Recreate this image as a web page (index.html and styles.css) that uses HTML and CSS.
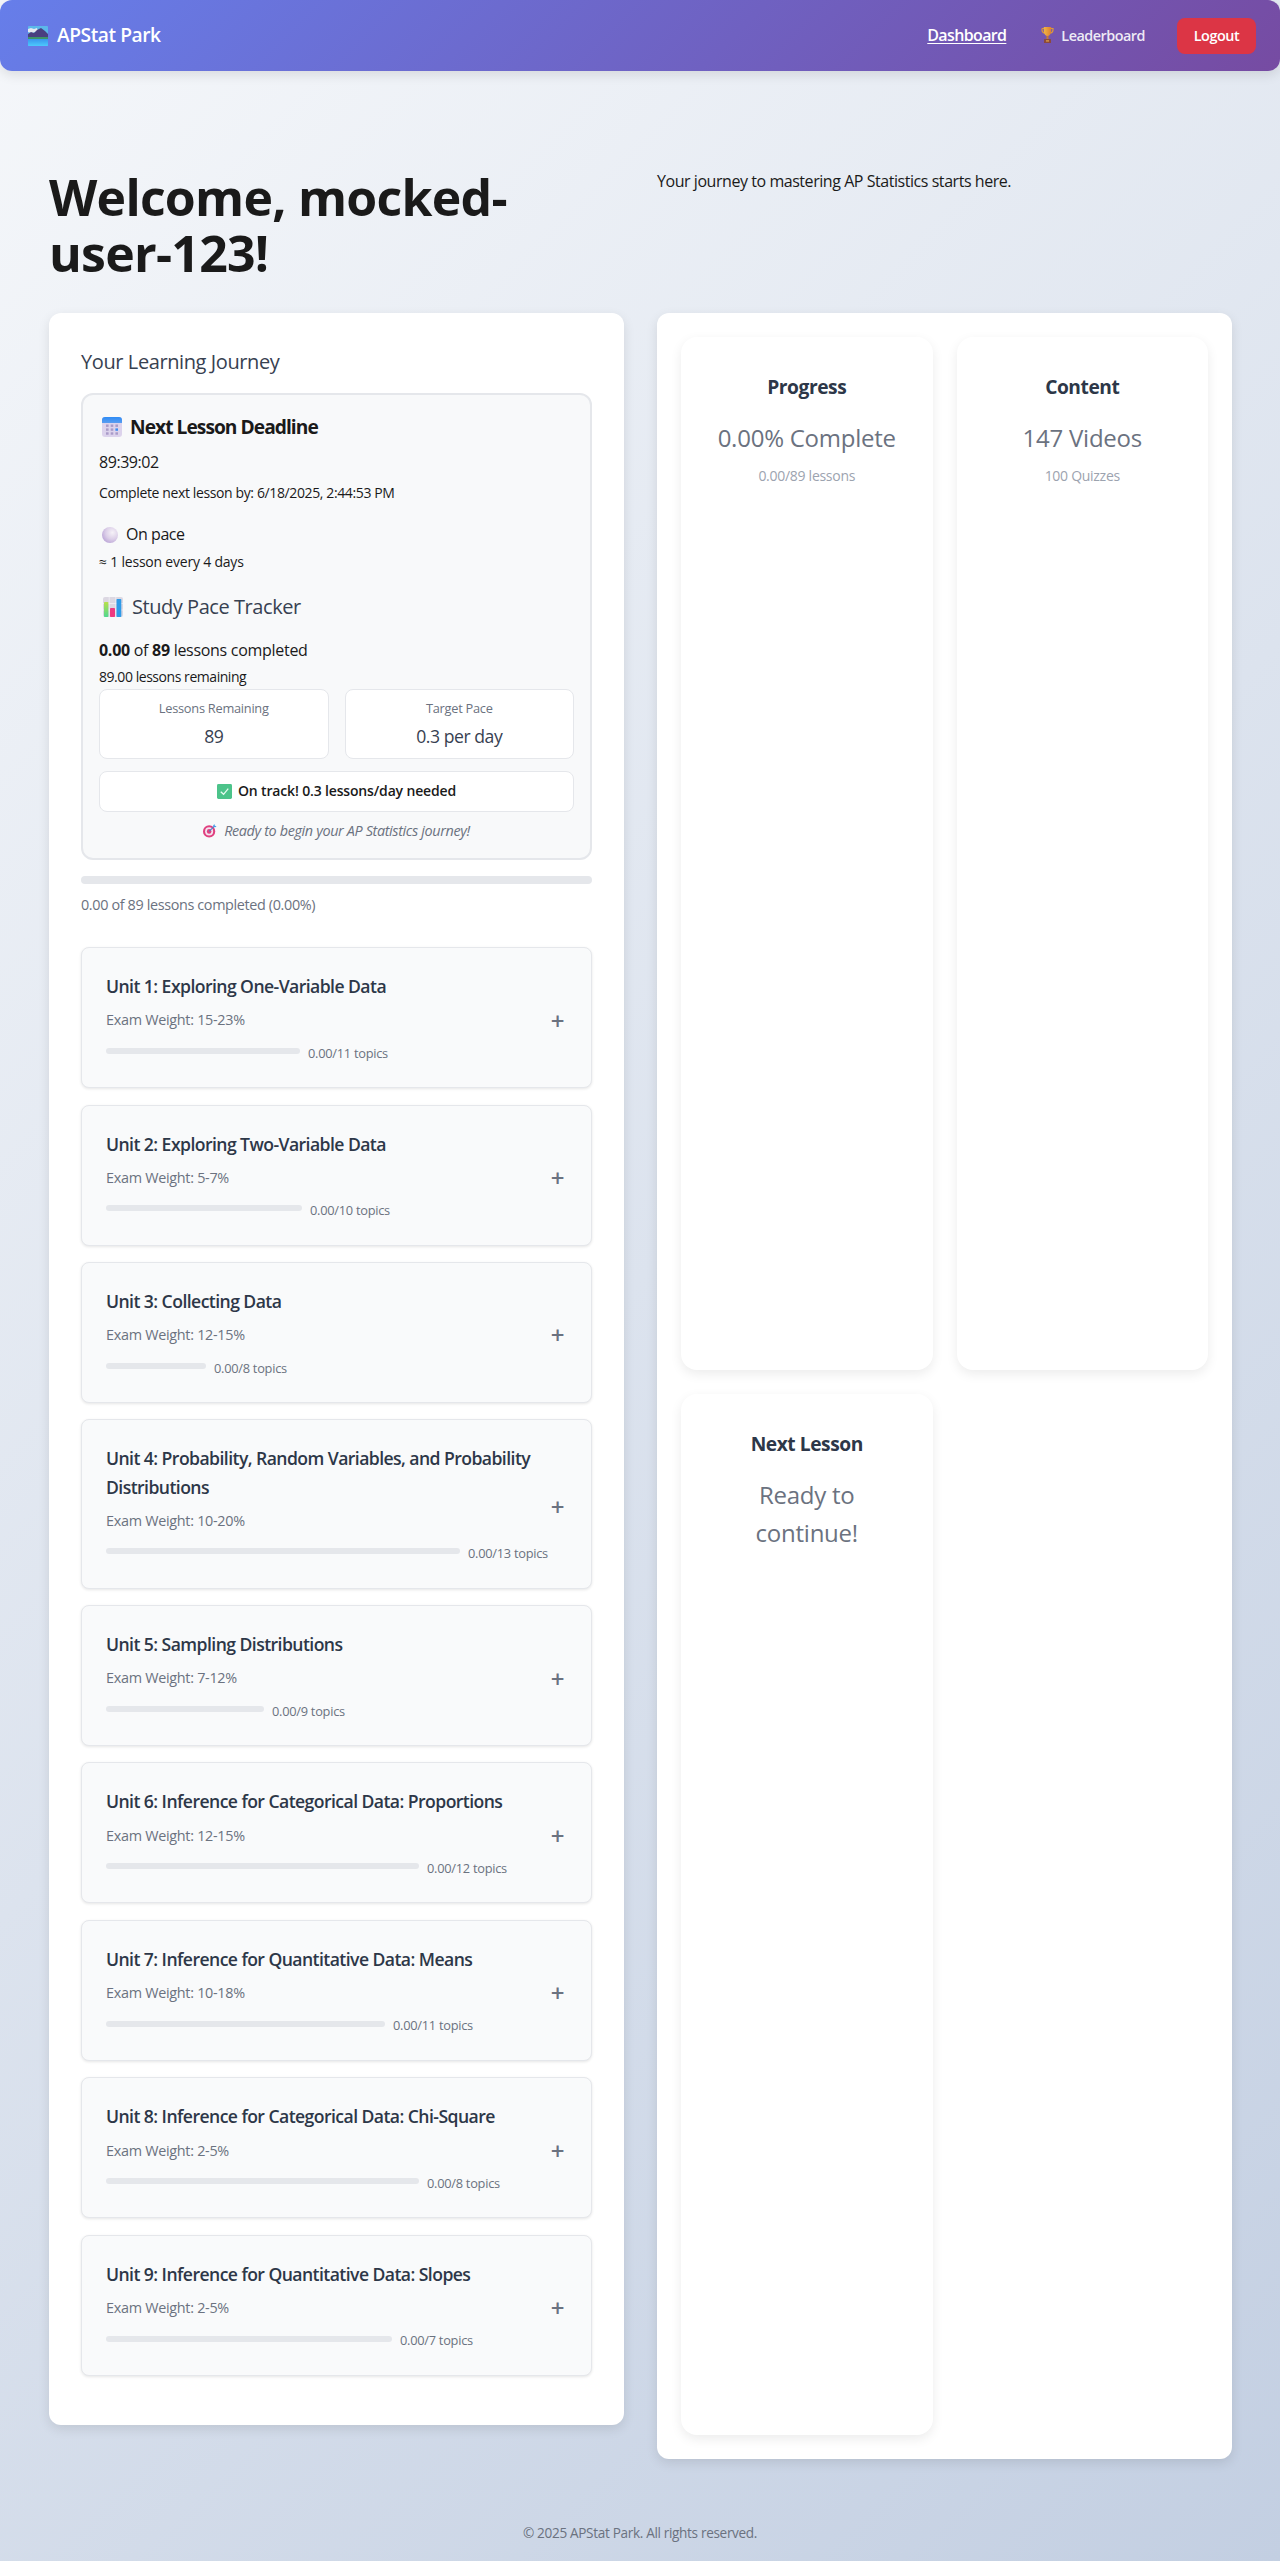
FILE: index.html
```html
<!DOCTYPE html>
<html lang="en">
<head>
  <meta charset="UTF-8" />
  <title>APStat Park</title>
  <link rel="stylesheet" href="styles.css">
</head>
<body>

  <svg class="defs" width="0" height="0" aria-hidden="true">
    <defs>
      <linearGradient id="lakeGrad" x1="0" y1="0" x2="0" y2="1">
        <stop offset="0" stop-color="#3a94ee" />
        <stop offset="1" stop-color="#4ccafc" />
      </linearGradient>
      <linearGradient id="cupGrad" x1="0" y1="0" x2="1" y2="0">
        <stop offset="0" stop-color="#f2b544" />
        <stop offset="1" stop-color="#dc7f30" />
      </linearGradient>
      <linearGradient id="calTop" x1="0" y1="0" x2="0" y2="1">
        <stop offset="0" stop-color="#2f8cf5" />
        <stop offset="1" stop-color="#5a9df0" />
      </linearGradient>
      <linearGradient id="greenBar" x1="0" y1="0" x2="0" y2="1">
        <stop offset="0" stop-color="#b8e04a" />
        <stop offset="1" stop-color="#50d890" />
      </linearGradient>
      <radialGradient id="ballGrad" cx="0.65" cy="0.35" r="0.75">
        <stop offset="0" stop-color="#f6f2f8" />
        <stop offset="0.55" stop-color="#dccfe8" />
        <stop offset="1" stop-color="#b9a3d6" />
      </radialGradient>
    </defs>
  </svg>

  <header id="topbar">
    <div class="brand">
      <svg class="logo" viewBox="0 0 20 20">
        <rect width="20" height="20" rx="1" fill="#5cb8ea" />
        <path d="M0 3 L3 2 L6 3 L9 2 L10 5 L4 7 L0 6 Z" fill="#e6e8f0" />
        <path d="M0 8 L3 6 L6 7 L9 4 L13 2 L17 5 L20 8 V13 H0 Z" fill="#4a3f80" />
        <rect y="11" width="20" height="2" fill="#3e9468" />
        <path d="M0 13 H20 V19 A1 1 0 0 1 19 20 H1 A1 1 0 0 1 0 19 Z" fill="url(#lakeGrad)" />
      </svg>
      <span>APStat Park</span>
    </div>
    <nav class="nav">
      <a class="nav-link active" href="#">Dashboard</a>
      <a class="nav-link small" href="#">
        <svg class="trophy" viewBox="0 0 13 16">
          <path d="M1 1.5 H12 V3 C12 5 10.5 6 9 6 M1 1.5 V3 C1 5 2.5 6 4 6" fill="none" stroke="#dd9a3a" stroke-width="1.2" />
          <path d="M2.8 0 H10.2 V4 C10.2 7 8.2 9 6.5 9 C4.8 9 2.8 7 2.8 4 Z" fill="url(#cupGrad)" />
          <rect x="5.5" y="9" width="2" height="3" fill="#c87a30" />
          <rect x="3" y="12" width="7" height="4" rx="0.6" fill="#8c4a3c" />
          <rect x="5" y="13.2" width="3" height="1.4" fill="#d89a48" />
        </svg>
        Leaderboard
      </a>
      <button class="logout">Logout</button>
    </nav>
  </header>

  <main id="page">
    <section class="welcome">
      <h1>Welcome, mocked-user-123!</h1>
      <p>Your journey to mastering AP Statistics starts here.</p>
    </section>

    <section class="columns">
      <div class="panel journey">
        <h2>Your Learning Journey</h2>

        <div class="pace-box">
          <h3 class="deadline-title">
            <svg class="emoji" viewBox="0 0 20 20">
              <rect width="20" height="20" rx="3" fill="#dcd3ec" />
              <path d="M3 0 H17 A3 3 0 0 1 20 3 V6 H0 V3 A3 3 0 0 1 3 0 Z" fill="url(#calTop)" />
              <g fill="#a99bc8">
                <rect x="4" y="7.5" width="2.6" height="2.4" /><rect x="8.7" y="7.5" width="2.6" height="2.4" /><rect x="13.4" y="7.5" width="2.6" height="2.4" />
                <rect x="4" y="11.4" width="2.6" height="2.4" /><rect x="8.7" y="11.4" width="2.6" height="2.4" />
                <rect x="4" y="15.3" width="2.6" height="2.4" /><rect x="8.7" y="15.3" width="2.6" height="2.4" /><rect x="13.4" y="15.3" width="2.6" height="2.4" />
              </g>
              <rect x="13.4" y="11.4" width="2.6" height="2.4" fill="#3f8cf0" />
            </svg>
            Next Lesson Deadline
          </h3>
          <div class="timer">89:39:02</div>
          <div class="due">Complete next lesson by: 6/18/2025, 2:44:53 PM</div>

          <div class="on-pace">
            <svg class="ball" viewBox="0 0 16 16"><circle cx="8" cy="8" r="8" fill="url(#ballGrad)" /></svg>
            On pace
          </div>
          <div class="every">≈ 1 lesson every 4 days</div>

          <h3 class="tracker-title">
            <svg class="emoji" viewBox="0 0 20 20">
              <rect width="20" height="20" rx="2" fill="#dcd8e2" />
              <path d="M0 6.5 H20 M0 13 H20 M6.2 0 V20 M12.8 0 V20" stroke="#f2f0f6" stroke-width="0.8" />
              <rect x="1" y="5" width="4.4" height="15" rx="0.8" fill="url(#greenBar)" />
              <rect x="7" y="11" width="5" height="9" rx="0.8" fill="#ee3a80" />
              <rect x="13.5" y="2" width="4.8" height="18" rx="0.8" fill="#2f9be8" />
            </svg>
            Study Pace Tracker
          </h3>
          <div class="done"><b>0.00</b> of <b>89</b> lessons completed</div>
          <div class="left">89.00 lessons remaining</div>

          <div class="stats">
            <div class="stat">
              <div class="stat-label">Lessons Remaining</div>
              <div class="stat-value">89</div>
            </div>
            <div class="stat">
              <div class="stat-label">Target Pace</div>
              <div class="stat-value">0.3 per day</div>
            </div>
          </div>

          <div class="track-note">
            <svg class="check" viewBox="0 0 16 16">
              <rect width="16" height="16" rx="1.5" fill="#4cc38a" />
              <path d="M4 8.2 L7 11 L12 5" fill="none" stroke="#e8fbf0" stroke-width="1.4" />
            </svg>
            On track! 0.3 lessons/day needed
          </div>

          <div class="ready">
            <svg class="target" viewBox="0 0 16 16">
              <circle cx="7" cy="9" r="7" fill="#e0407f" />
              <circle cx="7" cy="9" r="4.6" fill="#f4e3ee" />
              <circle cx="7" cy="9" r="2.6" fill="#e0407f" />
              <path d="M7 9 L13 3" stroke="#4a7fc8" stroke-width="1.2" />
              <path d="M11.5 2.5 L13 0.5 L13.5 2.5 L15.5 3 L13.5 4.5 Z" fill="#3f9bea" />
            </svg>
            Ready to begin your AP Statistics journey!
          </div>
        </div>

        <div class="overall-bar"></div>
        <div class="overall-text">0.00 of 89 lessons completed (0.00%)</div>

        <div class="units">
          <div class="unit">
            <div class="unit-info">
              <div class="unit-title">Unit 1: Exploring One-Variable Data</div>
              <div class="unit-weight">Exam Weight: 15-23%</div>
              <div class="unit-progress"><div class="mini-bar" style="width:194px"></div><span>0.00/11 topics</span></div>
            </div>
            <div class="plus">+</div>
          </div>
          <div class="unit">
            <div class="unit-info">
              <div class="unit-title">Unit 2: Exploring Two-Variable Data</div>
              <div class="unit-weight">Exam Weight: 5-7%</div>
              <div class="unit-progress"><div class="mini-bar" style="width:196px"></div><span>0.00/10 topics</span></div>
            </div>
            <div class="plus">+</div>
          </div>
          <div class="unit">
            <div class="unit-info">
              <div class="unit-title">Unit 3: Collecting Data</div>
              <div class="unit-weight">Exam Weight: 12-15%</div>
              <div class="unit-progress"><div class="mini-bar" style="width:100px"></div><span>0.00/8 topics</span></div>
            </div>
            <div class="plus">+</div>
          </div>
          <div class="unit">
            <div class="unit-info">
              <div class="unit-title">Unit 4: Probability, Random Variables, and Probability Distributions</div>
              <div class="unit-weight">Exam Weight: 10-20%</div>
              <div class="unit-progress"><div class="mini-bar" style="width:354px"></div><span>0.00/13 topics</span></div>
            </div>
            <div class="plus">+</div>
          </div>
          <div class="unit">
            <div class="unit-info">
              <div class="unit-title">Unit 5: Sampling Distributions</div>
              <div class="unit-weight">Exam Weight: 7-12%</div>
              <div class="unit-progress"><div class="mini-bar" style="width:158px"></div><span>0.00/9 topics</span></div>
            </div>
            <div class="plus">+</div>
          </div>
          <div class="unit">
            <div class="unit-info">
              <div class="unit-title">Unit 6: Inference for Categorical Data: Proportions</div>
              <div class="unit-weight">Exam Weight: 12-15%</div>
              <div class="unit-progress"><div class="mini-bar" style="width:313px"></div><span>0.00/12 topics</span></div>
            </div>
            <div class="plus">+</div>
          </div>
          <div class="unit">
            <div class="unit-info">
              <div class="unit-title">Unit 7: Inference for Quantitative Data: Means</div>
              <div class="unit-weight">Exam Weight: 10-18%</div>
              <div class="unit-progress"><div class="mini-bar" style="width:279px"></div><span>0.00/11 topics</span></div>
            </div>
            <div class="plus">+</div>
          </div>
          <div class="unit">
            <div class="unit-info">
              <div class="unit-title">Unit 8: Inference for Categorical Data: Chi-Square</div>
              <div class="unit-weight">Exam Weight: 2-5%</div>
              <div class="unit-progress"><div class="mini-bar" style="width:313px"></div><span>0.00/8 topics</span></div>
            </div>
            <div class="plus">+</div>
          </div>
          <div class="unit">
            <div class="unit-info">
              <div class="unit-title">Unit 9: Inference for Quantitative Data: Slopes</div>
              <div class="unit-weight">Exam Weight: 2-5%</div>
              <div class="unit-progress"><div class="mini-bar" style="width:286px"></div><span>0.00/7 topics</span></div>
            </div>
            <div class="plus">+</div>
          </div>
        </div>
      </div>

      <div class="panel summary">
        <div class="summary-card">
          <h3>Progress</h3>
          <div class="big">0.00% Complete</div>
          <div class="sub">0.00/89 lessons</div>
        </div>
        <div class="summary-card">
          <h3>Content</h3>
          <div class="big">147 Videos</div>
          <div class="sub">100 Quizzes</div>
        </div>
        <div class="summary-card">
          <h3>Next Lesson</h3>
          <div class="big">Ready to continue!</div>
        </div>
      </div>
    </section>
  </main>

  <footer id="footer">© 2025 APStat Park. All rights reserved.</footer>

</body>
</html>
```

FILE: styles.css
```css
* {
  box-sizing: border-box;
}

html {
  height: 100%;
}

body {
  margin: 0;
  min-height: 2561px;
  background: linear-gradient(135deg, #f5f7fa 0%, #c3cfe2 100%);
  color: #1a1a1a;
  font-family: 'Open Sans', 'Noto Sans', sans-serif;
  font-size: 16px;
  line-height: 1.6;
  letter-spacing: -0.028em;
}

.defs {
  position: absolute;
}

#topbar {
  display: flex;
  align-items: center;
  justify-content: space-between;
  height: 71px;
  padding: 0 24px 0 28px;
  background: linear-gradient(135deg, #667eea 0%, #764ba2 100%);
  border-radius: 12px;
  box-shadow: 0 4px 12px rgba(0, 0, 0, 0.1);
  color: white;
}

.brand {
  display: flex;
  align-items: center;
  gap: 9px;
  font-size: 19.2px;
  font-weight: 600;
}

.logo {
  width: 20px;
  height: 20px;
}

.nav {
  display: flex;
  align-items: center;
}

.nav-link {
  color: white;
  font-weight: 600;
  text-decoration: none;
}

.nav-link.active {
  text-decoration: underline;
  text-underline-offset: 2px;
  letter-spacing: -0.04em;
  margin-right: 35px;
}

.nav-link.small {
  display: flex;
  align-items: center;
  gap: 7px;
  font-size: 14.4px;
  letter-spacing: -0.035em;
  color: rgba(255, 255, 255, 0.9);
  margin-right: 32px;
}

.trophy {
  width: 13px;
  height: 16px;
}

.logout {
  width: 79px;
  height: 36px;
  border: 0;
  border-radius: 8px;
  background: #dc3545;
  color: white;
  font-family: inherit;
  font-size: 14.4px;
  font-weight: 600;
  letter-spacing: inherit;
}

#page {
  padding: 0 48px 0 49px;
}

.welcome {
  display: grid;
  grid-template-columns: 1fr 1fr;
  gap: 33px;
  padding-top: 98px;
  height: 242px;
}

.welcome h1 {
  max-width: 490px;
  margin: 0;
  font-size: 50px;
  font-weight: 700;
  line-height: 56px;
  letter-spacing: -0.015em;
}

.welcome p {
  margin: 0;
}

.columns {
  display: grid;
  grid-template-columns: 1fr 1fr;
  gap: 33px;
  align-items: start;
}

.panel {
  background: white;
  border-radius: 12px;
  box-shadow: 0 4px 12px rgba(0, 0, 0, 0.1);
}

.journey {
  padding: 33px 32px 33px;
}

.journey h2 {
  margin: 0 0 15px;
  color: #374151;
  font-size: 20px;
  font-weight: 500;
  line-height: 32px;
  letter-spacing: -0.02em;
}

.pace-box {
  padding: 16px;
  background: #f8f9fa;
  border: 2px solid #e5e7eb;
  border-radius: 12px;
}

.deadline-title,
.tracker-title {
  display: flex;
  align-items: center;
  margin: 0;
  line-height: 32px;
}

.deadline-title {
  gap: 8px;
  color: #1a1a1a;
  font-size: 19.2px;
  font-weight: 700;
  letter-spacing: -0.05em;
}

.tracker-title {
  gap: 9px;
  margin-top: 18px;
  color: #374151;
  font-size: 20px;
  font-weight: 500;
}

.emoji {
  width: 20px;
  height: 20px;
  margin-left: 3px;
}

.tracker-title .emoji {
  margin-left: 4px;
}

.timer {
  margin-top: 7px;
}

.due {
  margin-top: 6px;
  font-size: 14px;
  letter-spacing: -0.027em;
}

.on-pace {
  display: flex;
  align-items: center;
  gap: 8px;
  margin-top: 18px;
}

.ball {
  width: 16px;
  height: 16px;
  margin-left: 3px;
}

.every {
  margin-top: 3px;
  font-size: 14px;
  letter-spacing: -0.015em;
}

.done {
  margin-top: 15px;
  letter-spacing: -0.018em;
}

.left {
  margin-top: 2px;
  font-size: 14px;
}

.stats {
  display: grid;
  grid-template-columns: 1fr 1fr;
  gap: 16px;
  margin-top: 1px;
}

.stat,
.track-note {
  background: white;
  border: 1px solid #e5e7eb;
  border-radius: 8px;
  text-align: center;
}

.stat {
  height: 70px;
  padding-top: 8px;
}

.stat-label {
  color: #6b7280;
  font-size: 12.8px;
  letter-spacing: -0.02em;
}

.stat-value {
  margin-top: 4px;
  color: #374151;
  font-size: 17.6px;
  font-weight: 500;
}

.track-note {
  display: flex;
  align-items: center;
  justify-content: center;
  gap: 6px;
  height: 41px;
  margin-top: 12px;
  font-size: 14px;
  font-weight: 600;
  letter-spacing: -0.011em;
}

.check {
  width: 15px;
  height: 15px;
}

.ready {
  display: flex;
  align-items: center;
  justify-content: center;
  gap: 7px;
  margin-top: 7px;
  color: #6b7280;
  font-size: 14.4px;
  font-style: italic;
  letter-spacing: -0.025em;
}

.target {
  width: 14px;
  height: 15px;
}

.overall-bar {
  height: 8px;
  margin-top: 16px;
  background: #e5e7eb;
  border-radius: 4px;
}

.overall-text {
  margin-top: 9px;
  color: #6b7280;
  font-size: 14.4px;
  letter-spacing: -0.025em;
}

.units {
  margin-top: 31px;
}

.unit {
  display: flex;
  align-items: center;
  justify-content: space-between;
  margin-bottom: 16.45px;
  padding: 24px;
  background: #f9fafb;
  border: 1px solid #e5e7eb;
  border-radius: 8px;
  box-shadow: 0 1px 3px rgba(0, 0, 0, 0.1);
}

.unit-info {
  flex: 1;
  min-width: 0;
}

.unit-title {
  margin-bottom: 9px;
  color: #2d3748;
  font-size: 17.6px;
  font-weight: 600;
  letter-spacing: -0.032em;
  max-width: 440px;
}

.unit-weight {
  color: #6b7280;
  font-size: 14.4px;
  line-height: 22.4px;
  letter-spacing: -0.02em;
}

.unit-progress {
  display: flex;
  align-items: center;
  gap: 8px;
  margin-top: 11px;
  color: #6b7280;
  font-size: 12.8px;
  letter-spacing: -0.02em;
}

.mini-bar {
  height: 6px;
  margin-bottom: 4px;
  background: #e5e7eb;
  border-radius: 3px;
}

.plus {
  margin: 6px 3px 0 0;
  color: #6b7280;
  font-size: 24px;
  line-height: 1;
  font-weight: 600;
}

.summary {
  display: grid;
  grid-template-columns: 1fr 1fr;
  grid-template-rows: 1033px 1041px;
  gap: 24px;
  padding: 24px;
}

.summary-card {
  padding: 35px 32px 32px;
  background: white;
  border-radius: 16px;
  box-shadow: 0 4px 12px rgba(0, 0, 0, 0.08);
  text-align: center;
}

.summary-card h3 {
  margin: 0 0 16px;
  color: #2d3748;
  font-size: 19.2px;
  font-weight: 700;
}

.big {
  color: #6b7280;
  font-size: 24px;
  font-weight: 500;
  letter-spacing: -0.01em;
}

.sub {
  margin-top: 8px;
  color: #9ca3af;
  font-size: 14px;
  letter-spacing: -0.02em;
}

#footer {
  margin-top: 63px;
  color: #6b7280;
  font-size: 13.6px;
  letter-spacing: -0.025em;
  text-align: center;
}
```
